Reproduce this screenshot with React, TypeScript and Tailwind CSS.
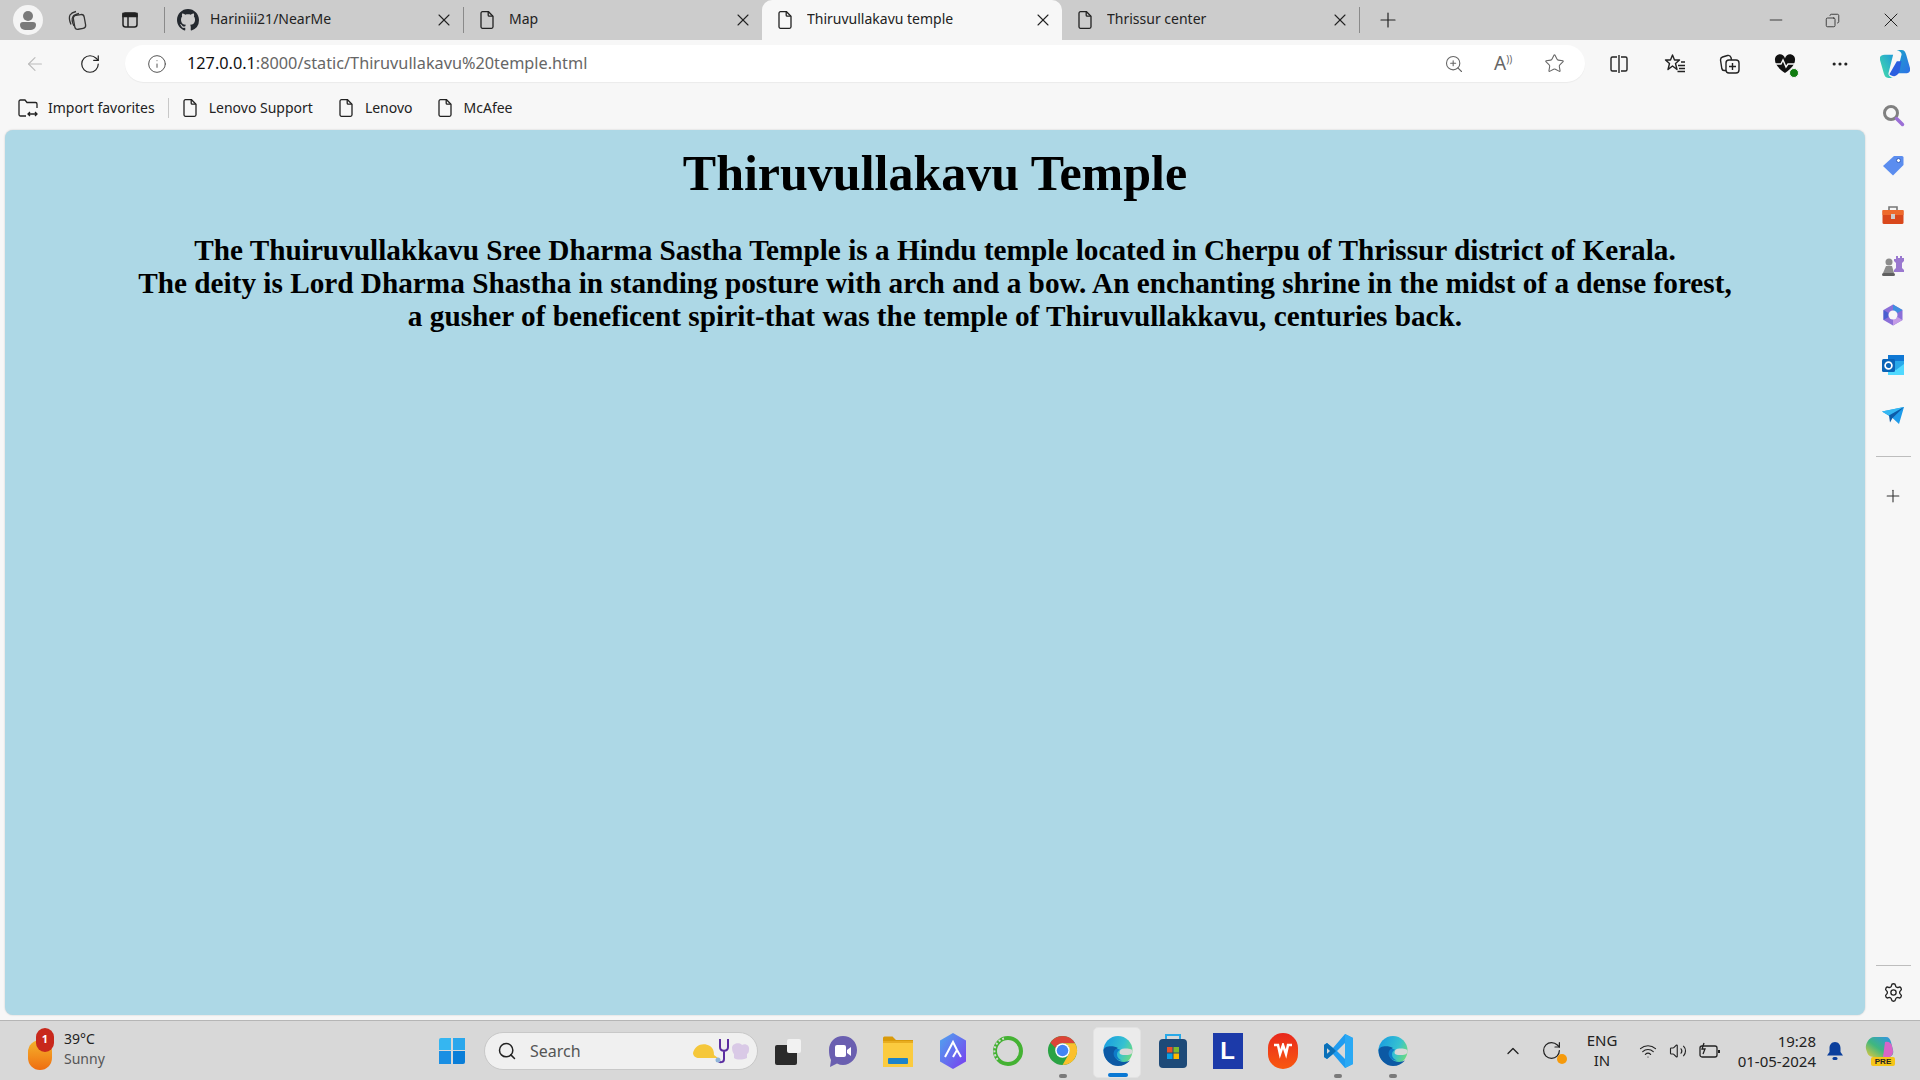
import { ReactNode } from "react";
import { ArrowLeft, RotateCw, Info, ZoomIn, Star, X, Plus, Minus, Search, Settings, ChevronUp, Wifi, Volume2, MoreHorizontal, Copy } from "lucide-react";

const uiFont = "font-['Noto_Sans','Open_Sans',sans-serif]";

function PageIcon({ size = 20 }: { size?: number }) {
  return (
    <svg width={size} height={size} viewBox="0 0 20 20" fill="none" stroke="#222" strokeWidth="1.3">
      <path d="M4 3.200a1.500 1.500 0 0 1 1.500-1.500h6l4.500 4.600v10.500a1.500 1.500 0 0 1-1.500 1.500h-9A1.500 1.500 0 0 1 4 16.800z" />
      <path d="M11.200 1.800v3.400a1 1 0 0 0 1 1h3.600" />
    </svg>
  );
}

function GithubIcon() {
  return (
    <svg width="22" height="22" viewBox="0 0 16 16" fill="#24292f">
      <path d="M8 0C3.58 0 0 3.58 0 8c0 3.54 2.29 6.53 5.47 7.59.4.07.55-.17.55-.38 0-.19-.01-.82-.01-1.49-2.01.37-2.53-.49-2.69-.94-.09-.23-.48-.94-.82-1.13-.28-.15-.68-.52-.01-.53.63-.01 1.08.58 1.23.82.72 1.21 1.87.87 2.33.66.07-.52.28-.87.51-1.07-1.78-.2-3.64-.89-3.64-3.95 0-.87.31-1.59.82-2.15-.08-.2-.36-1.02.08-2.12 0 0 .67-.21 2.2.82.64-.18 1.32-.27 2-.27s1.36.09 2 .27c1.53-1.04 2.2-.82 2.2-.82.44 1.1.16 1.92.08 2.12.51.56.82 1.27.82 2.15 0 3.07-1.87 3.75-3.65 3.95.29.25.54.73.54 1.48 0 1.07-.01 1.93-.01 2.2 0 .21.15.46.55.38A8.01 8.01 0 0 0 16 8c0-4.42-3.58-8-8-8z" />
    </svg>
  );
}

function Tab({ icon, title, active, width }: { icon: ReactNode; title: string; active?: boolean; width: string }) {
  return (
    <div className={`${width} h-10 flex items-center shrink-0 pl-[12px] pr-[10px] gap-[11px] ${active ? "bg-[#f7f7f7] rounded-t-[10px]" : ""}`}>
      <span className="w-[22px] flex justify-center shrink-0">{icon}</span>
      <span className="flex-1 text-[14px] leading-[20px] -mt-[2px] text-[#222] truncate">{title}</span>
      <X size={20} strokeWidth={1.3} className="text-[#222] shrink-0 -mr-[1px]" />
    </div>
  );
}

function Bookmark({ icon, label }: { icon: ReactNode; label: string }) {
  return (
    <div className="flex items-center gap-[9px] text-[14px] text-[#222]">
      {icon}
      <span>{label}</span>
    </div>
  );
}

function ToolBtn({ children, width = "w-[55px]" }: { children: ReactNode; width?: string }) {
  return <div className={`${width} h-8 flex items-center justify-center shrink-0`}>{children}</div>;
}

function Sidebar() {
  return (
    <aside className="w-[55px] shrink-0 flex flex-col items-center pl-[1px]">
      <div className="flex flex-col items-center gap-[26px] -mt-[27px] pb-[1px]">
        <svg width="24" height="24" viewBox="0 0 24 24" fill="none"><circle cx="10" cy="10" r="6.500" stroke="#808080" strokeWidth="3" /><path d="M15.500 15.500l6 6" stroke="#9b6fd6" strokeWidth="3.500" strokeLinecap="round" /></svg>
        <svg width="24" height="24" viewBox="0 0 24 24"><path d="M2 13L13 3h8a1.500 1.500 0 0 1 1.500 1.500V12L12 22.500z" fill="#5b8def" /><circle cx="17.500" cy="7.500" r="2" fill="#fff" stroke="#3563c0" /></svg>
        <svg width="24" height="24" viewBox="0 0 24 24"><path d="M8 7V4h8v3" fill="none" stroke="#777" strokeWidth="1.600" /><rect x="1.500" y="7" width="21" height="14" rx="1.500" fill="#d9481c" /><rect x="1.500" y="7" width="21" height="5" fill="#ee6a2c" /><rect x="10" y="11" width="4" height="5" fill="#ccc" /></svg>
        <svg width="24" height="24" viewBox="0 0 24 24"><path d="M13 6h2V3h2v2h2V3h2v2h2v3l-2 2v5l2 2v2H13v-2l2-2v-5l-2-2z" fill="#9a78cf" /><circle cx="8" cy="9" r="3.500" fill="#8c8c8c" /><path d="M5 13h6l2 7H2z" fill="#8c8c8c" /><rect x="1" y="20" width="13" height="3" rx="1.500" fill="#5f5f5f" /></svg>
        <svg width="24" height="24" viewBox="0 0 24 24"><path d="M12 1.500l9.500 5.500v10L12 22.500 2.500 17V7z" fill="#8b6fd8" /><path d="M12 1.500l9.500 5.500-5 3-4.500-2.500z" fill="#3f8fe0" /><path d="M2.500 7v10l5-3V10z" fill="#4a5fd0" /><path d="M12 22.500l9.500-5.500-5-3-4.500 2.500z" fill="#c39be6" /><circle cx="12" cy="12" r="4.500" fill="#f7f7f7" /></svg>
        <svg width="24" height="24" viewBox="0 0 24 24"><rect x="7" y="2" width="16" height="20" rx="1.500" fill="#28a8ea" /><rect x="7" y="2" width="16" height="6" fill="#0f78d4" /><path d="M7 13l8 4 8-6v11H7z" fill="#50d9ff" /><rect x="1" y="6" width="13" height="13" rx="1.500" fill="#0a64b8" /><circle cx="7.500" cy="12.500" r="3.400" fill="none" stroke="#fff" strokeWidth="1.700" /></svg>
        <svg width="24" height="24" viewBox="0 0 24 24"><path d="M1 8.500L23 4l-5 17-6.500-6z" fill="#1e9bea" /><path d="M1 8.500l7 4 15-8.500z" fill="#35b8f2" /><path d="M8 12.500l1 7 2.500-4.500L23 4z" fill="#0d5ca8" /></svg>
      </div>
      <div className="w-[35px] h-px bg-[#bdbdbd] mt-[28px]" />
      <Plus size={20} strokeWidth={1.3} className="text-[#333] mt-[29px]" />
      <div className="flex-1" />
      <div className="w-[35px] h-px bg-[#bdbdbd]" />
      <Settings size={21} strokeWidth={1.500} className="text-[#222] mt-[16px] mb-[12px]" />
    </aside>
  );
}

function EdgeIcon({ id, size = 32 }: { id: string; size?: number }) {
  return (
    <svg width={size} height={size} viewBox="0 0 32 32">
      <defs>
        <linearGradient id={id} x1="0" y1="0.300" x2="1" y2="0.700"><stop offset="0" stopColor="#1a9fe0" /><stop offset="0.600" stopColor="#35c1d1" /><stop offset="1" stopColor="#6fdc7a" /></linearGradient>
      </defs>
      <circle cx="16" cy="15.500" r="14.500" fill={`url(#${id})`} />
      <path d="M1.500 15.500C1.500 25 9 31 16 31c5 0 9-2 12-5.500-5 2.500-11 1.500-14-2-3-4-1.500-9 2-10.500-5-3-14.500-2-14.500 2.500z" fill="#0c59a4" />
      <path d="M30.500 16.500c0 3-3.500 3.500-7.500 3.500-3 0-5.500-.5-5.500-2.500 0-2.500 2-4 5-4 4 0 8 0 8 3z" fill="#d8d8d8" />
      <path d="M14 14c-3 2-3 6-1 8.500 1.500 2 4 3 7 3-3-1-5-3-5-6 0-2.500 1.500-4 3-4.800-1.500-.7-3-.7-4 -.7z" fill="#0e7bc9" />
    </svg>
  );
}

function TaskIcon({ children, dot, active }: { children: ReactNode; dot?: boolean; active?: boolean }) {
  return (
    <div className="relative w-[55px] h-[60px] flex items-center justify-center shrink-0">
      {active && <div className="absolute left-[3px] right-[4px] top-[6px] bottom-[3px] bg-[#ebebeb] rounded-[5px] border border-[#e2e2e2]" />}
      <div className="relative flex">{children}</div>
      {dot && <div className="absolute bottom-[3px] left-1/2 -translate-x-1/2 w-[8px] h-[4px] rounded-full bg-[#7a7a7a]" />}
      {active && <div className="absolute bottom-[4px] left-1/2 -translate-x-1/2 w-[20px] h-[4px] rounded-full bg-[#0a78d4]" />}
    </div>
  );
}

function Taskbar() {
  return (
    <footer className="h-[60px] shrink-0 bg-[#d8d8d8] border-t border-[#b5b5b5] flex items-center relative">
      {/* weather */}
      <div className="w-[439px] shrink-0 flex items-center pl-[28px]">
        <div className="relative w-[24px] h-[36px] mt-[2px]">
          <div className="absolute left-0 top-[6px] w-[24px] h-[30px] rounded-full bg-gradient-to-b from-[#f2b32c] to-[#ef6c0e]" />
          <div className="absolute left-[8px] -top-[6px] w-[18px] h-[24px] rounded-full bg-[#c8281c] text-white text-[11px] font-bold flex items-center justify-center">1</div>
        </div>
        <div className="ml-[12px] -mt-[3px] text-[14px] leading-[20px] text-[#222]">
          <div>39°C</div>
          <div className="text-[#555]">Sunny</div>
        </div>
      </div>
      <div className="w-[26px] h-[26px] shrink-0 grid grid-cols-2 gap-[1.500px]">
        <div className="bg-[#35b6f1] rounded-tl-[2px]" />
        <div className="bg-[#2aa7ec]" />
        <div className="bg-[#1a8fe3]" />
        <div className="bg-[#0a7ed8] rounded-br-[2px]" />
      </div>
      {/* search */}
      <div className="ml-[19px] w-[274px] h-[38px] shrink-0 rounded-full bg-[#f0f0f0] border border-[#c8c8c8] flex items-center pl-[12px] pr-[3px]">
        <Search size={20} strokeWidth={1.800} className="text-[#222]" />
        <span className="ml-[13px] flex-1 text-[16px] text-[#555]">Search</span>
        <svg width="64" height="36" viewBox="0 0 62 36">
          <path d="M2 20c2-8 10-11 17-7 3 2 4 5 4 9l4 3H8c-3 0-6-2-6-5z" fill="#f5c73a" />
          <path d="M29 6v8c0 5 8 5 8 0V6M33 18v8c0 4-5 4-6 1" fill="none" stroke="#5b2da0" strokeWidth="2" />
          <circle cx="27" cy="27" r="2.500" fill="#8fb3d9" />
          <path d="M41 15c0-5 8-6 10-3 3-2 8 0 7 5 0 3-2 4-2 4v4c-5 2-10 2-13 0v-4s-2-2-2-6z" fill="#d9c9e6" />
        </svg>
      </div>
      {/* pinned apps */}
      <div className="ml-[2px] flex items-center">
        <TaskIcon>
          <div className="relative w-[26px] h-[26px] mt-[2px]">
            <div className="absolute left-0 bottom-0 w-[22px] h-[20px] bg-[#2b2b2b] rounded-[2px]" />
            <div className="absolute right-0 top-0 w-[14px] h-[14px] bg-[#f2f2f2] rounded-[2px]" />
          </div>
        </TaskIcon>
        <TaskIcon>
          <svg width="30" height="34" viewBox="0 0 30 34"><path d="M15 2c8 0 14 6 14 14s-6 15-14 15c-2 0-4-.5-6-1.500L2 33l1-7C1.500 23 1 20 1 16 1 8 7 2 15 2z" fill="#6a5fb0" /><rect x="7" y="11" width="11" height="12" rx="2" fill="#fff" /><path d="M19 16l4-3v9l-4-3z" fill="#fff" /></svg>
        </TaskIcon>
        <TaskIcon>
          <svg width="30" height="32" viewBox="0 0 30 32"><path d="M0 3a1.500 1.500 0 0 1 1.500-1.500h8L13 5h17v3H0z" fill="#d99a0a" /><rect x="0" y="6" width="30" height="26" fill="#fbcb3f" /><rect x="0" y="6" width="30" height="2" fill="#e8ad20" /><rect x="5" y="23" width="20" height="6" rx="1" fill="#1d83c9" /></svg>
        </TaskIcon>
        <TaskIcon>
          <svg width="30" height="36" viewBox="0 0 30 36">
            <defs><linearGradient id="arc" x1="0" y1="0" x2="1" y2="1"><stop offset="0" stopColor="#4fa6ee" /><stop offset="1" stopColor="#7a3cf0" /></linearGradient></defs>
            <path d="M15 0l13 7.500v21L15 36 2 28.500v-21z" fill="url(#arc)" />
            <path d="M7 24l8-15 4 8M15 24l4-7 4 7" fill="none" stroke="#fff" strokeWidth="2" />
          </svg>
        </TaskIcon>
        <TaskIcon>
          <svg width="32" height="34" viewBox="0 0 32 34">
            <circle cx="16" cy="17" r="13" fill="none" stroke="#44b233" strokeWidth="4" />
            <path d="M12 4.500A13 13 0 0 0 6 26" fill="none" stroke="#d8d8d8" strokeWidth="2" strokeDasharray="2 2" />
          </svg>
        </TaskIcon>
        <TaskIcon dot>
          <svg width="31" height="33" viewBox="0 0 32 32">
            <circle cx="16" cy="16" r="15" fill="#2aa344" />
            <path d="M16 1a15 15 0 0 1 13 7.500H16a7.500 7.500 0 0 0-7 5L3.500 8A15 15 0 0 1 16 1z" fill="#dc4437" />
            <path d="M29 8.500A15 15 0 0 1 16 31l6.500-11.500A7.500 7.500 0 0 0 16 8.500z" fill="#fbc02d" />
            <circle cx="16" cy="16" r="7.500" fill="#fff" />
            <circle cx="16" cy="16" r="6" fill="#4385f4" />
          </svg>
        </TaskIcon>
        <TaskIcon active><EdgeIcon id="edge1" /></TaskIcon>
        <TaskIcon>
          <svg width="30" height="36" viewBox="0 0 30 36"><path d="M8 7V2h14v5" fill="none" stroke="#29a9e8" strokeWidth="2" /><rect x="1" y="6" width="28" height="29" rx="4" fill="#1e4a78" /><rect x="9" y="14" width="5.500" height="5.500" fill="#e8532b" /><rect x="15.500" y="14" width="5.500" height="5.500" fill="#7cbb2e" /><rect x="9" y="20.500" width="5.500" height="5.500" fill="#08a1e6" /><rect x="15.500" y="20.500" width="5.500" height="5.500" fill="#fcb900" /></svg>
        </TaskIcon>
        <TaskIcon>
          <div className="w-[30px] h-[36px] bg-[#1c3aa9] flex items-center justify-center text-white text-[24px] font-bold font-['Liberation_Sans',sans-serif] leading-none">L</div>
        </TaskIcon>
        <TaskIcon>
          <div className="w-[30px] h-[36px] rounded-full bg-gradient-to-b from-[#e8261c] to-[#f9570e] flex items-center justify-center">
            <svg width="20" height="16" viewBox="0 0 20 16"><path d="M1 2h4l2 9 3-9 3 9 2-9h4" fill="none" stroke="#fff" strokeWidth="2.500" /></svg>
          </div>
        </TaskIcon>
        <TaskIcon dot>
          <svg width="30" height="36" viewBox="0 0 30 36"><path d="M22 1l8 4v26l-8 4-12-14-6 5-3-2V12l3-2 6 5z" fill="#1f9cf0" /><path d="M22 1l8 4v26l-8 4z" fill="#2aa9f4" /><path d="M22 10l-8 8 8 8z" fill="#d8d8d8" /><path d="M10 15L4 10l-3 2v12l3 2 6-5 3-3z" fill="#0a70b8" /><path d="M7 18l-3-2.800v5.600z" fill="#d8d8d8" /></svg>
        </TaskIcon>
        <TaskIcon dot><EdgeIcon id="edge2" /></TaskIcon>
      </div>
      <div className="flex-1" />
      {/* tray */}
      <div className="flex items-center text-[#222]">
        <ChevronUp size={20} strokeWidth={1.600} />
        <div className="relative ml-[18px] w-[22px] h-[22px]">
          <RotateCw size={21} strokeWidth={1.400} />
          <div className="absolute right-[-4px] bottom-[-2px] w-[10px] h-[10px] rounded-full bg-[#f59a0c]" />
        </div>
        <div className="w-[50px] ml-[14px] text-center text-[15px] leading-[20px] -mt-[1px]"><div>ENG</div><div>IN</div></div>
        <Wifi size={18} strokeWidth={1.600} className="ml-[12px]" />
        <Volume2 size={18} strokeWidth={1.500} className="ml-[12px]" />
        <svg width="22" height="18" viewBox="0 0 22 18" fill="none" stroke="#222" strokeWidth="1.300" className="ml-[12px]"><rect x="1" y="4" width="17" height="11" rx="2" /><path d="M20 8v3" strokeWidth="2" /><path d="M5 1L3 7h3l-2 5" /></svg>
        <div className="w-[90px] ml-[5px] text-right text-[15px] leading-[20px]"><div>19:28</div><div>01-05-2024</div></div>
        <svg width="18" height="20" viewBox="0 0 18 20" className="ml-[10px]"><path d="M9 1c3.500 0 5.500 3 5.500 6v4l2.500 3.500H1L3.500 11V7C3.500 4 5.500 1 9 1z" fill="#0b3f9c" /><rect x="6.500" y="16" width="5" height="3" rx="1.500" fill="#0b3f9c" /></svg>
        <div className="relative w-[30px] h-[30px] ml-[21px] mr-[25px]">
          <svg width="29" height="26" viewBox="0 0 29 26">
            <defs><linearGradient id="cpl" x1="0" y1="1" x2="1" y2="0"><stop offset="0" stopColor="#e8c93a" /><stop offset=".45" stopColor="#3fb77f" /><stop offset="1" stopColor="#2f8ff0" /></linearGradient></defs>
            <path d="M9 1h12c3 0 4 2 5 5l2 8c1 4-1 7-5 7H10C6 21 3 20 2 16l-1-3C0 8 4 1 9 1z" fill="url(#cpl)" />
            <path d="M20 6c4-1 6 1 7 4l1 5c0 4-2 6-5 6h-5z" fill="#d864c8" />
          </svg>
          <div className="absolute right-0 bottom-0 h-[9px] w-[24px] rounded-[2px] bg-[#f5c518] text-[8px] leading-[9px] font-bold text-center text-[#222] font-['Liberation_Sans',sans-serif]">PRE</div>
        </div>
      </div>
    </footer>
  );
}

export default function App() {
  return (
    <div className={`w-[1920px] h-[1080px] overflow-hidden flex flex-col bg-[#f7f7f7] ${uiFont}`}>
      {/* Tab strip */}
      <header className="h-10 shrink-0 bg-[#cccccc] flex items-center">
        <div className="w-[164px] shrink-0 flex items-center pl-[13px]">
          <div className="w-[30px] h-[30px] rounded-full bg-[#f4f4f4] flex flex-col items-center justify-center">
            <div className="w-[10px] h-[10px] rounded-full bg-[#7a7a7a]" />
            <div className="w-[16px] h-[8px] mt-[1px] rounded-t-[3px] rounded-b-[5px] bg-[#7a7a7a]" />
          </div>
          <svg width="22" height="22" viewBox="0 0 22 22" fill="none" stroke="#333" strokeWidth="1.300" className="ml-[23px]"><rect x="8" y="6" width="11" height="14" rx="3" transform="rotate(-10 13 13)" /><path d="M5 15.500C3.500 12 3 8 4 6c1-1.500 4-3 6-3.500M8 17C6 13 6 9 7 7.500 8 6 11 5 13 4.500" /></svg>
          <svg width="20" height="20" viewBox="0 0 20 20" fill="none" stroke="#222" strokeWidth="1.500" className="ml-[32px]"><rect x="3" y="3" width="14" height="14" rx="2.500" /><path d="M3 3.500h14v3H3z" fill="#222" /><path d="M8 6v11" /></svg>
        </div>
        <div className="w-px h-[26px] bg-[#8a8a8a] shrink-0" />
        <Tab width="w-[298px]" icon={<GithubIcon />} title="Hariniii21/NearMe" />
        <div className="w-px h-[26px] bg-[#8a8a8a] shrink-0" />
        <Tab width="w-[298px]" icon={<PageIcon />} title="Map" />
        <Tab width="w-[300px]" active icon={<PageIcon />} title="Thiruvullakavu temple" />
        <Tab width="w-[297px]" icon={<PageIcon />} title="Thrissur center" />
        <div className="w-px h-[26px] bg-[#8a8a8a] shrink-0" />
        <Plus size={24} strokeWidth={1.200} className="ml-[16px] text-[#222] shrink-0" />
        <div className="flex-1" />
        <div className="w-[57px] flex justify-center"><Minus size={20} strokeWidth={1} className="text-[#222]" /></div>
        <div className="w-[57px] flex justify-center"><Copy size={15} strokeWidth={1.300} className="text-[#222] -scale-x-100" /></div>
        <div className="w-[59px] flex justify-center"><X size={24} strokeWidth={1} className="text-[#222]" /></div>
      </header>

      {/* Toolbar */}
      <div className="h-[45px] shrink-0 flex items-center pt-[2px] pl-[9px]">
        <ToolBtn width="w-[52px]"><ArrowLeft size={22} strokeWidth={1.200} className="text-[#bbb]" /></ToolBtn>
        <ToolBtn width="w-[58px]"><RotateCw size={22} strokeWidth={1.300} className="text-[#222]" /></ToolBtn>
        <div className="ml-[6px] w-[1460px] h-[37px] shrink-0 bg-white rounded-full flex items-center pl-[22px] pr-[20px] shadow-[0_1px_1px_rgba(0,0,0,0.05)]">
          <Info size={20} strokeWidth={1.200} className="text-[#555]" />
          <div className="ml-[20px] flex-1 text-[16.250px] text-[#666]"><span className="text-[#111]">127.0.0.1</span>:8000/static/Thiruvullakavu%20temple.html</div>
          <ZoomIn size={20} strokeWidth={1.300} className="text-[#666]" />
          <div className="ml-[30px] w-[22px] text-[19px] leading-none text-[#666]">A<span className="text-[10px] align-top">))</span></div>
          <Star size={21} strokeWidth={1.200} className="ml-[28px] text-[#666]" />
        </div>
        <div className="w-[6px] shrink-0" />
        <ToolBtn width="w-[56px]">
          <svg width="20" height="20" viewBox="0 0 20 20" fill="none" stroke="#222" strokeWidth="1.400"><path d="M8 3H3.500A1.500 1.500 0 0 0 2 4.500v11A1.500 1.500 0 0 0 3.500 17H8M12 3h4.500A1.500 1.500 0 0 1 18 4.500v11a1.500 1.500 0 0 1-1.500 1.500H12M10 1v18" /></svg>
        </ToolBtn>
        <ToolBtn>
          <svg width="22" height="22" viewBox="0 0 22 22" fill="none" stroke="#222" strokeWidth="1.400"><path d="M8.500 2l2 5h5l-4 3.500 1.500 6-4.500-3.500L4 16.500l1.500-6L1.500 7h5z" strokeLinejoin="round" /><path d="M14 12.500h7M15 15.500h6M13.500 18.500h7.500M17 9h4" /></svg>
        </ToolBtn>
        <ToolBtn><svg width="22" height="22" viewBox="0 0 22 22" fill="none" stroke="#222" strokeWidth="1.400"><rect x="7" y="7" width="13" height="13" rx="3" /><path d="M13.500 10v7M10 13.500h7M7 17.500H5c-1 0-2-1-2.200-2L1.500 7c0-1.500.5-2.500 2-3l5-1.500c1.500-.3 3 .5 3.500 2L12.500 7" /></svg></ToolBtn>
        <ToolBtn>
          <div className="relative">
            <svg width="22" height="20" viewBox="0 0 22 20"><path d="M11 19C4 14 1 10 1 6a5 5 0 0 1 10-1.500A5 5 0 0 1 21 6c0 4-3 8-10 13z" fill="#111" /><path d="M1 10h6l2-4 3 7 2-3h7" fill="none" stroke="#f7f7f7" strokeWidth="1.400" /></svg>
            <div className="absolute -right-[3px] -bottom-[4px] w-[10px] h-[10px] rounded-full bg-[#107c10] border border-[#f7f7f7]" />
          </div>
        </ToolBtn>
        <ToolBtn><MoreHorizontal size={20} strokeWidth={1.800} className="text-[#222]" /></ToolBtn>
        <ToolBtn>
          <svg width="30" height="28" viewBox="0 0 32 30">
            <defs><linearGradient id="cp1" x1="0" y1="0" x2="1" y2="1"><stop offset="0" stopColor="#1aa5c9" /><stop offset="1" stopColor="#2f6fe8" /></linearGradient><linearGradient id="cp2" x1="0" y1="1" x2="1" y2="0"><stop offset="0" stopColor="#48e0a8" /><stop offset="1" stopColor="#1d9ad8" /></linearGradient></defs>
            <path d="M17 0h6c3 0 4 2 5 5l4 14c1 4-1 6-5 6h-9l5-20c.5-2-3-5-6-5z" fill="url(#cp1)" />
            <path d="M15 30H9c-3 0-4-2-5-5L0 11C-1 7 1 5 5 5h9L9 25c-.5 2 3 5 6 5z" fill="url(#cp2)" />
            <path d="M18 12h5l-2 10c-.5 3-3 6-6 6-2 0-4-1-5-2z" fill="#2b5fe0" />
          </svg>
        </ToolBtn>
      </div>

      {/* Favorites bar */}
      <nav className="h-[45px] shrink-0 flex items-center pl-[17px]">
        <Bookmark
          label="Import favorites"
          icon={<svg width="22" height="22" viewBox="0 0 22 22" fill="none" stroke="#222" strokeWidth="1.300"><path d="M9 19H3.500A1.500 1.500 0 0 1 2 17.500v-13A1.500 1.500 0 0 1 3.500 3H8l2 2.500h8.500A1.500 1.500 0 0 1 20 7v4" /><path d="M11 17h9M13 15l-2 2 2 2M18 15l2 2-2 2" /></svg>}
        />
        <div className="w-px h-[20px] bg-[#c8c8c8] ml-[13px] mr-[11px]" />
        <Bookmark label="Lenovo Support" icon={<PageIcon />} />
        <div className="w-[23px]" />
        <Bookmark label="Lenovo" icon={<PageIcon />} />
        <div className="w-[22px]" />
        <Bookmark label="McAfee" icon={<PageIcon />} />
      </nav>

      {/* Page + sidebar */}
      <div className="flex-1 min-h-0 flex pl-[5px] pb-[5px]">
        <main className="flex-1 rounded-[8px] bg-[#add8e6] text-black text-center font-['Liberation_Serif',serif] font-bold shadow-[0_0_2px_rgba(0,0,0,0.2)]">
          <h1 className="text-[50px] leading-[55px] mt-[16px]">Thiruvullakavu Temple</h1>
          <p className="text-[29.250px] leading-[33px] mt-[33px]">
            The Thuiruvullakkavu Sree Dharma Sastha Temple is a Hindu temple located in Cherpu of Thrissur district of Kerala.<br />
            The deity is Lord Dharma Shastha in standing posture with arch and a bow. An enchanting shrine in the midst of a dense forest,<br />
            a gusher of beneficent spirit-that was the temple of Thiruvullakkavu, centuries back.
          </p>
        </main>
        <Sidebar />
      </div>

      <Taskbar />
    </div>
  );
}
